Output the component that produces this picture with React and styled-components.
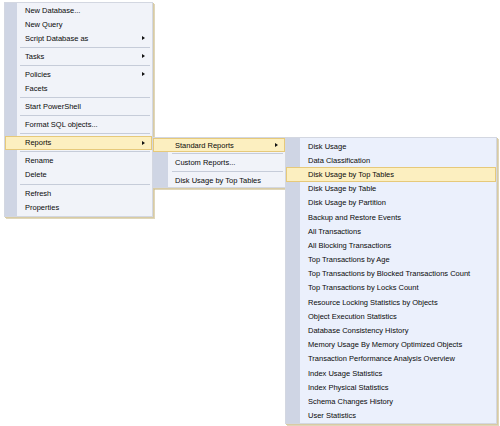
import React from 'react';
import styled, { createGlobalStyle } from 'styled-components';

const GlobalStyle = createGlobalStyle`
  html, body {
    margin: 0;
    padding: 0;
    background: #ffffff;
  }
  body {
    font-family: "Liberation Sans", Arial, sans-serif;
  }
`;

const Canvas = styled.div`
  position: relative;
  width: 500px;
  height: 426px;
  overflow: hidden;
  background: #ffffff;
`;

// popup menus cascade over each other, so they sit at their own spots
const Menu = styled.div`
  position: absolute;
  left: ${props => props.$left}px;
  top: ${props => props.$top}px;
  width: ${props => props.$width}px;
  box-sizing: border-box;
  padding: ${props => props.$pad || '0 0 1px'};
  border: 1px solid #d3d7e1;
  background: linear-gradient(
    to right,
    #cfd5e4 0,
    #cfd5e4 ${props => props.$gutter}px,
    ${props => props.$bg} ${props => props.$gutter}px
  );
  box-shadow: 1px 1px 0 #d8cba4, 2px 2px 0 rgba(196, 180, 130, 0.55);
  display: flex;
  flex-direction: column;
`;

const Item = styled.div`
  display: flex;
  align-items: center;
  box-sizing: border-box;
  height: ${props => props.$h}px;
  padding-left: ${props => props.$indent}px;
  padding-right: ${props => props.$right || 0}px;
  font-size: 7.5px;
  color: #0a0a0a;
  white-space: nowrap;
  border: 1px solid ${props => (props.$active ? '#e6c97a' : 'transparent')};
  background: ${props => (props.$active ? '#fcefc0' : 'transparent')};
`;

const Arrow = styled.span`
  margin-left: auto;
  width: 0;
  height: 0;
  border-left: 3px solid #111;
  border-top: 2.5px solid transparent;
  border-bottom: 2.5px solid transparent;
`;

const Separator = styled.div`
  height: ${props => props.$h || 4}px;
  display: flex;
  align-items: center;
  padding-left: ${props => props.$indent}px;
  padding-right: 2px;
  &::after {
    content: '';
    flex: 1;
    height: 1px;
    background: #c6ccd9;
  }
`;

const mainItems = [
  { label: 'New Database...' },
  { label: 'New Query' },
  { label: 'Script Database as', sub: true },
  'sep',
  { label: 'Tasks', sub: true },
  'sep',
  { label: 'Policies', sub: true },
  { label: 'Facets' },
  'sep',
  { label: 'Start PowerShell' },
  'sep',
  { label: 'Format SQL objects...' },
  'sep',
  { label: 'Reports', sub: true, active: true },
  'sep',
  { label: 'Rename' },
  { label: 'Delete' },
  'sep',
  { label: 'Refresh' },
  { label: 'Properties' },
];

const reportItems = [
  { label: 'Standard Reports', sub: true, active: true },
  'sep',
  { label: 'Custom Reports...' },
  'sep',
  { label: 'Disk Usage by Top Tables' },
];

const standardReports = [
  'Disk Usage',
  'Data Classification',
  'Disk Usage by Top Tables',
  'Disk Usage by Table',
  'Disk Usage by Partition',
  'Backup and Restore Events',
  'All Transactions',
  'All Blocking Transactions',
  'Top Transactions by Age',
  'Top Transactions by Blocked Transactions Count',
  'Top Transactions by Locks Count',
  'Resource Locking Statistics by Objects',
  'Object Execution Statistics',
  'Database Consistency History',
  'Memory Usage By Memory Optimized Objects',
  'Transaction Performance Analysis Overview',
  'Index Usage Statistics',
  'Index Physical Statistics',
  'Schema Changes History',
  'User Statistics',
];

function MenuList({ items, rowH, indent, sepIndent, sepH, arrowRight }) {
  return items.map((it, i) =>
    it === 'sep' ? (
      <Separator key={i} $indent={sepIndent} $h={sepH} />
    ) : (
      <Item key={i} $h={rowH} $indent={indent} $right={arrowRight} $active={it.active}>
        {it.label}
        {it.sub && <Arrow />}
      </Item>
    )
  );
}

export default function App() {
  return (
    <>
      <GlobalStyle />
      <Canvas>
        <Menu $left={4} $top={2} $width={149} $gutter={12} $bg="#f1f3f9" $pad="0 0 2px">
          <MenuList items={mainItems} rowH={14.1} indent={19} sepIndent={15} sepH={4} arrowRight={6} />
        </Menu>
        <Menu $left={152} $top={137} $width={134} $gutter={15} $bg="#f1f3f9" $pad="0">
          <MenuList items={reportItems} rowH={14} indent={21} sepIndent={19} sepH={3.5} arrowRight={6} />
        </Menu>
        <Menu $left={285} $top={137} $width={212} $gutter={14} $bg="#ebf0fc" $pad="1px 0 0">
          {standardReports.map((label, i) => (
            <Item key={label} $h={14.2} $indent={21} $active={i === 2}>
              {label}
            </Item>
          ))}
        </Menu>
      </Canvas>
    </>
  );
}
